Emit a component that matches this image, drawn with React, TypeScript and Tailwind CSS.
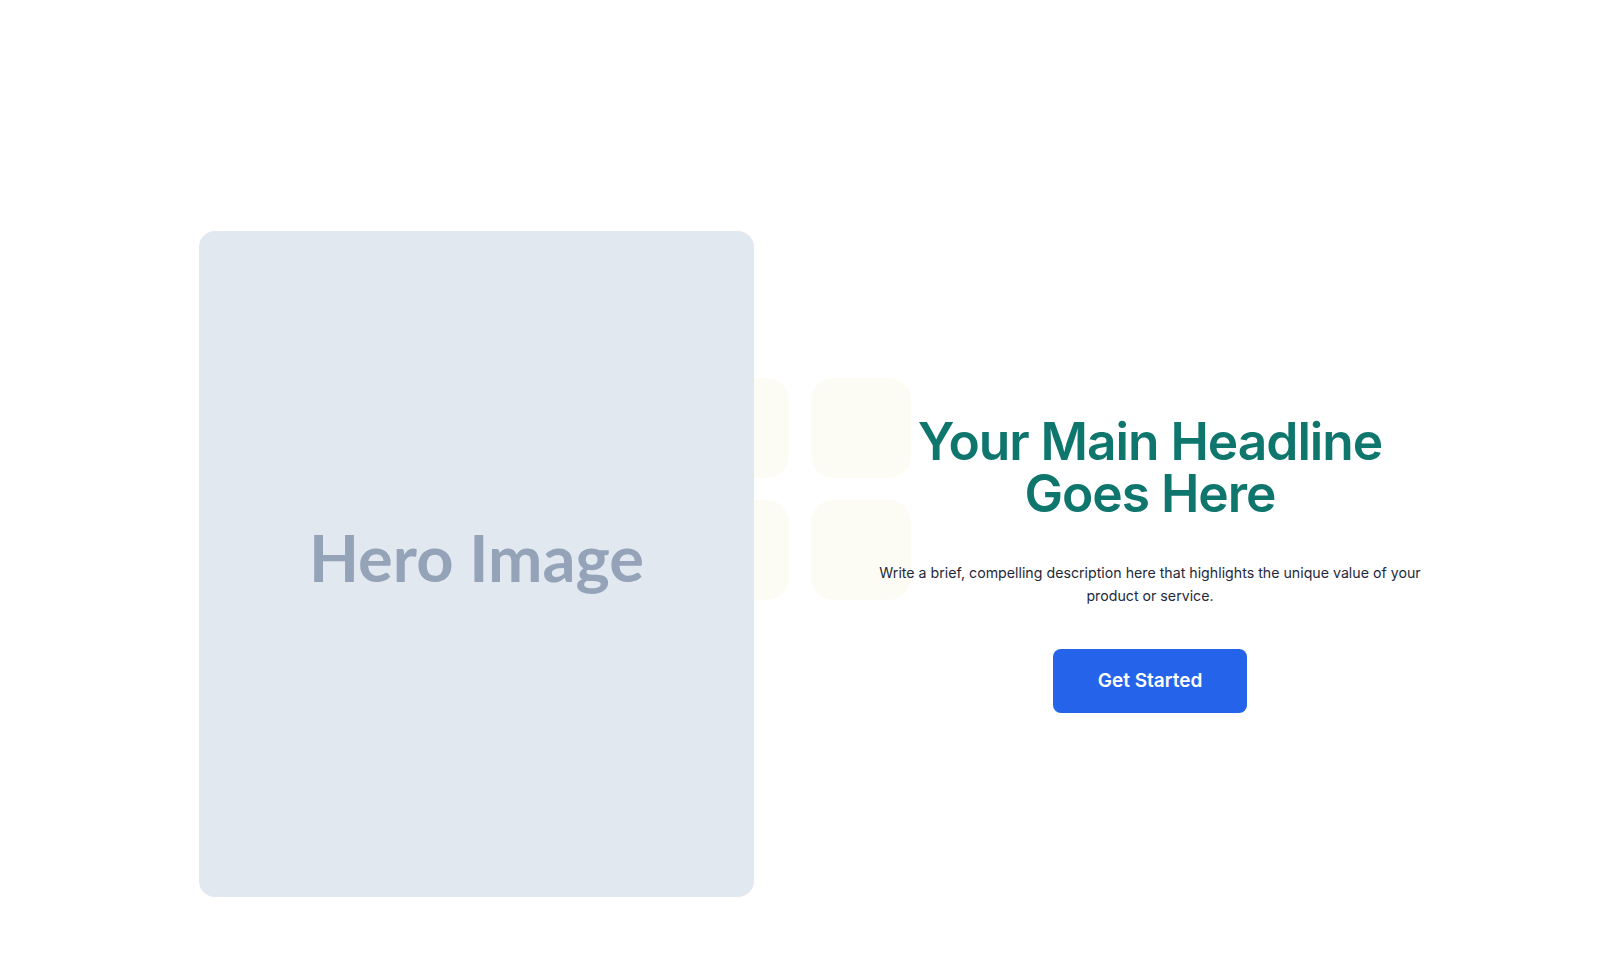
export default function App() {
  return (
    <div className="min-h-screen w-full bg-white">
      <section className="relative pt-[231px] pb-[81px] pl-[199px]">
        {/* decorative tiles, partly tucked behind the hero card */}
        <div className="absolute left-[689px] top-[378px] grid grid-cols-2 gap-[22px]">
          <div className="h-[100px] w-[100px] rounded-[22px] bg-[#fdfcf4]" />
          <div className="h-[100px] w-[100px] rounded-[22px] bg-[#fdfcf4]" />
          <div className="h-[100px] w-[100px] rounded-[22px] bg-[#fdfcf4]" />
          <div className="h-[100px] w-[100px] rounded-[22px] bg-[#fdfcf4]" />
        </div>

        <div className="relative flex items-center">
          <div className="relative z-10 flex h-[666px] w-[555px] shrink-0 items-center justify-center rounded-2xl bg-[#e2e8f0] pb-[12px]">
            <span className="font-['Lato',sans-serif] text-[65px] font-bold text-[#94a3b8]">
              Hero Image
            </span>
          </div>

          <div className="relative ml-[106px] flex w-[580px] flex-col items-center text-center font-['Inter',sans-serif]">
            <h1 className="text-[51.5px] font-semibold leading-[52px] tracking-[-0.02em] text-[#0f766e]">
              Your Main Headline
              <br />
              Goes Here
            </h1>
            <p className="mt-[43px] max-w-[560px] text-[14.2px] leading-[22.5px] text-[#1e293b]">
              Write a brief, compelling description here that highlights the
              unique value of your product or service.
            </p>
            <button className="mt-[42px] flex h-[64px] w-[194px] items-center justify-center rounded-lg bg-[#2563eb] text-[19px] font-semibold text-white">
              Get Started
            </button>
          </div>
        </div>
      </section>
    </div>
  );
}
